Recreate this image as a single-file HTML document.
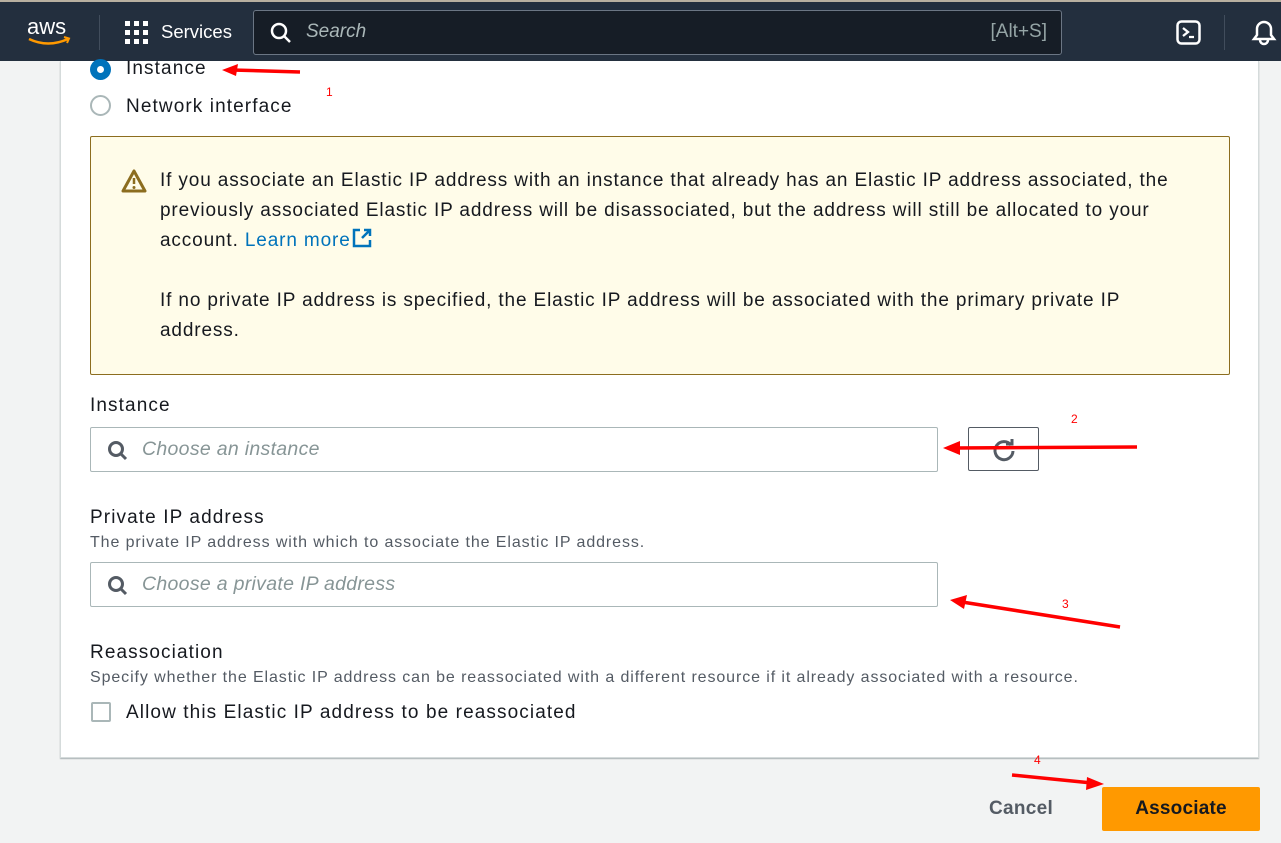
<!DOCTYPE html>
<html><head><meta charset="utf-8"><style>
*{box-sizing:border-box;margin:0;padding:0}
body{width:1281px;height:843px;overflow:hidden;background:#f2f3f3;font-family:"Liberation Sans",sans-serif;color:#16191f;position:relative}
.nav{position:absolute;left:0;top:0;width:1281px;height:61px;background:#232f3e;border-top:2px solid #b8b0a0}
.panel{position:absolute;left:60px;top:61px;width:1199px;height:697px;background:#fff;border:1px solid #d5dbdb;border-top:none;box-shadow:0 1px 1px rgba(0,28,36,.3)}
.t{position:absolute;font-size:19px;white-space:nowrap;letter-spacing:1.1px}
.small{font-size:16px;color:#545b64;letter-spacing:0.9px}
.alert{position:absolute;left:90px;top:136px;width:1140px;height:239px;background:#fffce9;border:1px solid #8c6d1f;border-radius:2px}
.alert p{position:absolute;left:69px;font-size:19px;line-height:30px;color:#16191f;letter-spacing:0.86px;white-space:nowrap}
.inp{position:absolute;left:90px;width:848px;height:45px;border:1px solid #aab7b8;border-radius:2px}
.inp span{position:absolute;left:51px;top:10px;font-style:italic;color:#879596;font-size:19.5px;letter-spacing:0.3px}
.inp svg{position:absolute;left:16px;top:12px}
.radio{position:absolute;width:21px;height:21px;border-radius:50%}
</style></head><body>
<div class="nav">
<svg style="position:absolute;left:26px;top:11px" width="50" height="36" viewBox="0 0 50 36">
<text x="1" y="21" fill="#fff" font-family="Liberation Sans" font-size="22">aws</text>
<path d="M3 26 Q22 35 42 26" stroke="#f90" stroke-width="2.5" fill="none"/><path d="M38 24 l5 1.5 -2 4.5" stroke="#f90" stroke-width="2" fill="none"/></svg>
<div style="position:absolute;left:99px;top:13px;width:1px;height:35px;background:#414d5c"></div>
<svg style="position:absolute;left:125px;top:19px" width="24" height="24"><g fill="#fff"><rect x="0" y="0" width="5" height="5"/><rect x="9" y="0" width="5" height="5"/><rect x="18" y="0" width="5" height="5"/><rect x="0" y="9" width="5" height="5"/><rect x="9" y="9" width="5" height="5"/><rect x="18" y="9" width="5" height="5"/><rect x="0" y="18" width="5" height="5"/><rect x="9" y="18" width="5" height="5"/><rect x="18" y="18" width="5" height="5"/></g></svg>
<div class="t" style="left:161px;top:19px;color:#fff;font-size:18.5px;letter-spacing:0">Services</div>
<div style="position:absolute;left:253px;top:8px;width:809px;height:45px;background:#161d26;border:1px solid #6b7684;border-radius:3px">
<svg style="position:absolute;left:16px;top:11px" width="22" height="22"><circle cx="9" cy="9" r="7" stroke="#fff" stroke-width="2.5" fill="none"/><path d="M14 14 l6 6" stroke="#fff" stroke-width="2.5"/></svg>
<span style="position:absolute;left:52px;top:10px;font-style:italic;color:#aab7b8;font-size:19px">Search</span>
<span style="position:absolute;right:14px;top:10px;color:#95a5a6;font-size:19px">[Alt+S]</span></div>
<svg style="position:absolute;left:1176px;top:18px" width="25" height="25"><rect x="1.5" y="1.5" width="22" height="22" rx="4" stroke="#fff" stroke-width="2.5" fill="none"/><path d="M7 8 l5 4 -5 4 M13 17 h5" stroke="#fff" stroke-width="2.3" fill="none"/></svg>
<div style="position:absolute;left:1224px;top:13px;width:1px;height:35px;background:#414d5c"></div>
<svg style="position:absolute;left:1250px;top:17px" width="28" height="28"><path d="M4 20 h20 l-3-4 v-6 a7 7 0 0 0-14 0 v6z" stroke="#fff" stroke-width="2.5" fill="none"/><path d="M10 21 a4 4 0 0 0 8 0" stroke="#fff" stroke-width="2.5" fill="none"/></svg>
</div>
<div class="panel"></div>
<div class="radio" style="left:90px;top:59px;background:#0073bb"><div style="position:absolute;left:7px;top:7px;width:7px;height:7px;border-radius:50%;background:#fff"></div></div>
<div class="t" style="left:126px;top:58px;color:#16191f">Instance</div>
<div class="radio" style="left:90px;top:95px;border:2px solid #aab7b8"></div>
<div class="t" style="left:126px;top:96px">Network interface</div>
<div class="alert">
<svg style="position:absolute;left:30px;top:32px" width="26" height="24"><path d="M13 2 L24 22 H2 Z" stroke="#8c6d1f" stroke-width="3" fill="none" stroke-linejoin="round"/><path d="M13 9 v6" stroke="#8c6d1f" stroke-width="2.5"/><circle cx="13" cy="18.5" r="1.5" fill="#8c6d1f"/></svg>
<p style="top:29px">If you associate an Elastic IP address with an instance that already has an Elastic IP address associated, the<br>previously associated Elastic IP address will be disassociated, but the address will still be allocated to your<br>account. <span style="color:#0073bb">Learn more</span><svg width="22" height="22" style="vertical-align:-3px"><path d="M9 3 H3 V19 H19 V13" stroke="#0073bb" stroke-width="2.5" fill="none"/><path d="M11 11 L19 3 M13 3 H19 V9" stroke="#0073bb" stroke-width="2.5" fill="none"/></svg></p>
<p style="top:149px">If no private IP address is specified, the Elastic IP address will be associated with the primary private IP<br>address.</p>
</div>
<div class="t" style="left:90px;top:395px">Instance</div>
<div class="inp" style="top:427px"><svg width="22" height="22"><circle cx="9" cy="9" r="6.5" stroke="#545b64" stroke-width="3" fill="none"/><path d="M14 14 l5 5" stroke="#545b64" stroke-width="3"/></svg><span>Choose an instance</span></div>
<div style="position:absolute;left:968px;top:427px;width:71px;height:44px;border:1px solid #545b64;border-radius:2px">
<svg style="position:absolute;left:22px;top:9px" width="26" height="26"><path d="M20 8 A9 9 0 1 0 22 14" stroke="#545b64" stroke-width="3" fill="none"/><path d="M15 7 H21 V2" stroke="#545b64" stroke-width="3" fill="none"/></svg></div>
<div class="t" style="left:90px;top:507px">Private IP address</div>
<div class="t small" style="left:90px;top:534px">The private IP address with which to associate the Elastic IP address.</div>
<div class="inp" style="top:562px"><svg width="22" height="22"><circle cx="9" cy="9" r="6.5" stroke="#545b64" stroke-width="3" fill="none"/><path d="M14 14 l5 5" stroke="#545b64" stroke-width="3"/></svg><span>Choose a private IP address</span></div>
<div class="t" style="left:90px;top:642px">Reassociation</div>
<div class="t small" style="left:90px;top:669px">Specify whether the Elastic IP address can be reassociated with a different resource if it already associated with a resource.</div>
<div style="position:absolute;left:91px;top:702px;width:20px;height:20px;border:2px solid #aab7b8;border-radius:2px"></div>
<div class="t" style="left:126px;top:702px">Allow this Elastic IP address to be reassociated</div>
<div class="t" style="left:989px;top:798px;font-weight:bold;color:#545b64;letter-spacing:0.3px">Cancel</div>
<div style="position:absolute;left:1102px;top:787px;width:158px;height:44px;background:#ff9900;border-radius:2px;text-align:center;line-height:44px;font-weight:bold;font-size:19px;color:#16191f;letter-spacing:0.2px">Associate</div>
<svg style="position:absolute;left:0;top:0" width="1281" height="843">
<g fill="#f00" font-family="Liberation Sans" font-size="12">
<text x="326" y="96">1</text><text x="1071" y="423">2</text><text x="1062" y="608">3</text><text x="1034" y="764">4</text></g>
<g stroke="#f00" stroke-width="3.5" fill="none"><path d="M300 72 L232 70"/><path d="M1137 447 L955 448"/><path d="M1120 627 L962 602"/><path d="M1012 775 L1092 783"/></g>
<g fill="#f00"><path d="M222 70 L238 64 L236 76Z"/><path d="M943 448 L960 441 L960 455Z"/><path d="M950 600 L967 595 L964 609Z"/><path d="M1104 784 L1087 777 L1086 790Z"/></g>
</svg>
</body></html>
